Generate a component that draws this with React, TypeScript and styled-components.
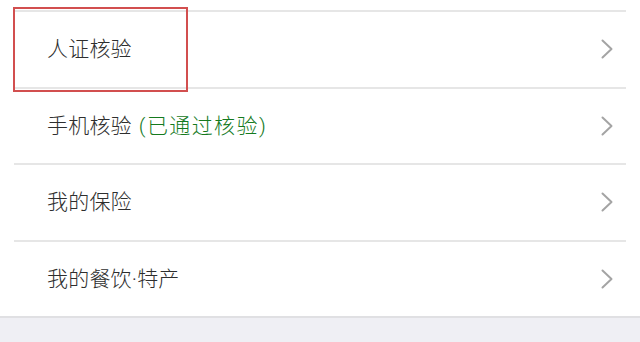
import styled, { createGlobalStyle } from 'styled-components';

const GlobalStyle = createGlobalStyle`
  html, body {
    margin: 0;
    padding: 0;
    background: #ffffff;
  }
  body {
    font-family: Roboto, "Noto Sans CJK SC", "Noto Sans", sans-serif;
  }
`;

const Page = styled.div`
  position: relative;
  width: 640px;
  height: 342px;
  overflow: hidden;
  display: flex;
  flex-direction: column;
  background: #ffffff;
`;

const TopGap = styled.div`
  height: 10px;
  flex: none;
`;

const List = styled.ul`
  list-style: none;
  margin: 0;
  padding: 0;
  display: flex;
  flex-direction: column;
`;

const Row = styled.li`
  box-sizing: border-box;
  height: 76.5px;
  margin: 0 14px;
  border-top: 2px solid #e6e6e6;
  display: flex;
  align-items: center;
  justify-content: space-between;
  padding: 0 13px 0 33px;
`;

const Label = styled.span`
  font-size: 21px;
  font-weight: 300;
  color: #2e2e2e;
  letter-spacing: 0.2px;
  margin-top: -4px;
`;

const Note = styled.span`
  color: #157a1e;
  margin-left: 7px;
  letter-spacing: 1.4px;
`;

const Chevron = styled.svg`
  width: 12px;
  height: 20px;
  flex: none;
`;

const Footer = styled.div`
  flex: 1;
  background: #efeff4;
  border-top: 2px solid #e0e0e3;
`;

const Highlight = styled.div`
  position: absolute;
  left: 13px;
  top: 7px;
  width: 175px;
  height: 85px;
  box-sizing: border-box;
  border: 2px solid #d24f4f;
  pointer-events: none;
`;

type Item = { label: string; note?: string };

const items: Item[] = [
  { label: '人证核验' },
  { label: '手机核验', note: '(已通过核验)' },
  { label: '我的保险' },
  { label: '我的餐饮·特产' },
];

const Arrow = () => (
  <Chevron viewBox="0 0 12 20">
    <polyline
      points="1.5,1.5 10.5,10 1.5,18.5"
      fill="none"
      stroke="#a4a4a4"
      strokeWidth="2"
      strokeLinecap="round"
      strokeLinejoin="round"
    />
  </Chevron>
);

export default function App() {
  return (
    <>
      <GlobalStyle />
      <Page>
        <TopGap />
        <List>
          {items.map((item) => (
            <Row key={item.label}>
              <Label>
                {item.label}
                {item.note && <Note>{item.note}</Note>}
              </Label>
              <Arrow />
            </Row>
          ))}
        </List>
        <Footer />
        <Highlight />
      </Page>
    </>
  );
}
